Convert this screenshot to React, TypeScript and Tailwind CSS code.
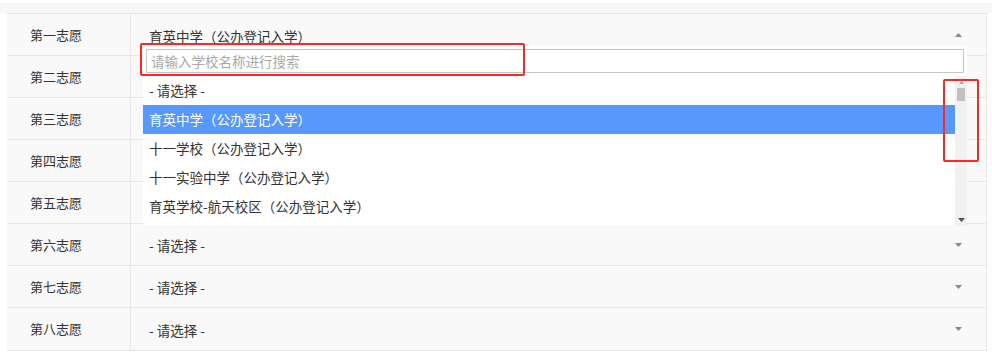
const rows = [
  { label: "第一志愿", value: "育英中学（公办登记入学）", open: true },
  { label: "第二志愿", value: "" },
  { label: "第三志愿", value: "" },
  { label: "第四志愿", value: "" },
  { label: "第五志愿", value: "" },
  { label: "第六志愿", value: "- 请选择 -" },
  { label: "第七志愿", value: "- 请选择 -" },
  { label: "第八志愿", value: "- 请选择 -" },
];

const options = [
  "- 请选择 -",
  "育英中学（公办登记入学）",
  "十一学校（公办登记入学）",
  "十一实验中学（公办登记入学）",
  "育英学校-航天校区（公办登记入学）",
];

const Caret = ({ up }: { up?: boolean }) => (
  <svg width="7" height="4" viewBox="0 0 7 4" className="fill-[#888]">
    {up ? <path d="M0 4 L3.5 0 L7 4 Z" /> : <path d="M0 0 L7 0 L3.5 4 Z" />}
  </svg>
);

const Dropdown = () => (
  <div className="absolute left-[143px] top-[46px] w-[824px] h-[179px] bg-white">
    <div className="px-[3px] pt-[3px]">
      <div className="h-[24px] border border-[#c6c6c6] flex items-center px-[4px] text-[13.5px] text-[#a9a9a9]">
        请输入学校名称进行搜索
      </div>
    </div>
    <div className="flex mt-[3px] h-[150px]">
      <ul className="flex-1">
        {options.map((o, i) => (
          <li
            key={o}
            className={
              "h-[29px] flex items-center px-[6px] text-[13.5px] " +
              (i === 1 ? "bg-[#5897fb] text-white" : "text-[#333]")
            }
          >
            {o}
          </li>
        ))}
      </ul>
      <div className="w-[12px] bg-[#f1f1f1] flex flex-col items-center">
        <div className="h-[12px] flex items-center">
          <svg width="5" height="3" viewBox="0 0 5 3" className="fill-[#a3a3a3]">
            <path d="M0 3 L2.5 0 L5 3 Z" />
          </svg>
        </div>
        <div className="w-[8px] h-[13px] bg-[#c1c1c1]" />
        <div className="flex-1" />
        <div className="h-[12px] flex items-center">
          <svg width="7" height="4" viewBox="0 0 7 4" className="fill-[#505050]">
            <path d="M0 0 L7 0 L3.5 4 Z" />
          </svg>
        </div>
      </div>
    </div>
  </div>
);

export default function App() {
  return (
    <div
      className="relative w-[992px] h-[357px] bg-white pt-[3px] overflow-hidden"
      style={{ fontFamily: '"Noto Sans CJK SC", "Noto Sans", sans-serif' }}
    >
      <div className="h-[10px] bg-[#f7f7f7]" />
      <div className="ml-[7px] w-[980px] border-t border-r border-[#e7e7e7]">
        {rows.map((r, i) => (
          <div
            key={r.label}
            className={
              "flex border-b border-[#e7e7e7] bg-[#f9f9f9] " +
              (i === 7 ? "h-[43px]" : "h-[42px]")
            }
          >
            <div className="w-[124px] border-r border-[#e7e7e7] flex items-center pl-[23px] text-[13px] text-[#333]">
              {r.label}
            </div>
            <div className="flex-1 flex items-center justify-between pl-[18px] pr-[24px] text-[13.5px] text-[#333]">
              <span className={r.open ? "mt-[3px]" : "mt-[2px]"}>{r.value}</span>
              {(r.open || r.value) && <Caret up={r.open} />}
            </div>
          </div>
        ))}
      </div>

      <Dropdown />

      <div className="absolute left-[140px] top-[43px] w-[385px] h-[33px] border-2 border-[#ff2626] rounded-[2px]" />
      <div className="absolute left-[943px] top-[79px] w-[36px] h-[83px] border-2 border-[#ff2626] rounded-[2px]" />
    </div>
  );
}
